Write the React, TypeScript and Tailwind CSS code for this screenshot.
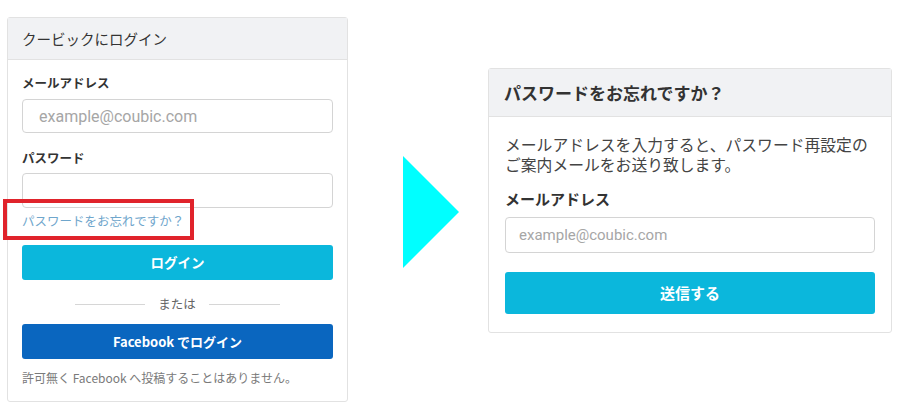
import React from 'react';

const jp = { fontFamily: '"Noto Sans CJK JP", "Noto Sans", sans-serif' };
const latin = { fontFamily: 'Roboto, "Liberation Sans", sans-serif' };

const LoginCard: React.FC = () => (
  <div className="ml-[7px] mt-[17px] w-[341px] rounded-[3px] border border-[#e2e2e2] bg-white">
    <div className="flex h-[42px] items-center border-b border-[#e2e2e2] bg-[#f1f2f4] px-[14px] text-[14.5px] text-[#333]">
      クービックにログイン
    </div>
    <div className="px-[14px] pb-[14px] pt-[14px]">
      <div className="h-[18px] text-[12.5px] font-bold leading-[18px] text-[#333]">メールアドレス</div>
      <input
        className="mt-[7px] h-[34px] w-full rounded-[4px] border border-[#d4d4d4] px-[16px] text-[16px] outline-none placeholder:text-[#a6a6a6]"
        style={latin}
        placeholder="example@coubic.com"
      />
      <div className="mt-[16px] h-[18px] text-[12.5px] font-bold leading-[18px] text-[#333]">パスワード</div>
      <input type="password" className="mt-[6px] h-[35px] w-full rounded-[4px] border border-[#d4d4d4] px-[16px] outline-none" />
      <div className="relative mt-[4px] h-[18px] text-[12.5px] leading-[18px] text-[#6fa6cc]">
        パスワードをお忘れですか？
        <div className="absolute -left-[19px] -top-[13px] h-[41px] w-[191px] border-4 border-[#e0232b]" />
      </div>
      <button className="mt-[15px] flex h-[35px] w-full items-center justify-center rounded-[3px] bg-[#0bb7dc] text-[13.5px] font-bold text-white">
        ログイン
      </button>
      <div className="mt-[15px] flex h-[18px] items-center justify-center gap-[13px] text-[12.5px] text-[#666]">
        <div className="h-px w-[70px] bg-[#d6d6d6]" />
        <span>または</span>
        <div className="h-px w-[71px] bg-[#d6d6d6]" />
      </div>
      <button className="mt-[11px] flex h-[35px] w-full items-center justify-center rounded-[3px] bg-[#0a66bf] text-[13px] font-bold text-white">
        Facebook でログイン
      </button>
      <div className="mt-[10px] h-[18px] text-[12px] leading-[18px] text-[#7a7a7a]">
        許可無く Facebook へ投稿することはありません。
      </div>
    </div>
  </div>
);

const ResetCard: React.FC = () => (
  <div className="ml-[29px] mt-[68px] w-[404px] rounded-[3px] border border-[#e2e2e2] bg-white">
    <div className="flex h-[48px] items-center border-b border-[#e2e2e2] bg-[#f1f2f4] px-[15px] text-[17px] font-bold text-[#333]">
      パスワードをお忘れですか？
    </div>
    <div className="px-[16px] pb-[18px] pt-[18px]">
      <p className="text-[15.8px] leading-[20px] text-[#444]">
        メールアドレスを入力すると、パスワード再設定の
        <br />
        ご案内メールをお送り致します。
      </p>
      <div className="mt-[14px] h-[20px] text-[15px] font-bold leading-[20px] text-[#333]">メールアドレス</div>
      <input
        className="mt-[8px] h-[36px] w-full rounded-[4px] border border-[#d4d4d4] px-[13px] text-[15px] outline-none placeholder:text-[#a6a6a6]"
        style={latin}
        placeholder="example@coubic.com"
      />
      <button className="mt-[19px] flex h-[42px] w-full items-center justify-center rounded-[3px] bg-[#0bb7dc] text-[15px] font-bold text-white">
        送信する
      </button>
    </div>
  </div>
);

export default function App() {
  return (
    <div className="flex h-[411px] w-[910px] items-start overflow-hidden bg-white" style={jp}>
      <LoginCard />
      <svg className="ml-[55px] mt-[156px] shrink-0" width="56" height="112" viewBox="0 0 56 112">
        <polygon points="0,0 56,56 0,112" fill="#00ffff" />
      </svg>
      <ResetCard />
    </div>
  );
}
